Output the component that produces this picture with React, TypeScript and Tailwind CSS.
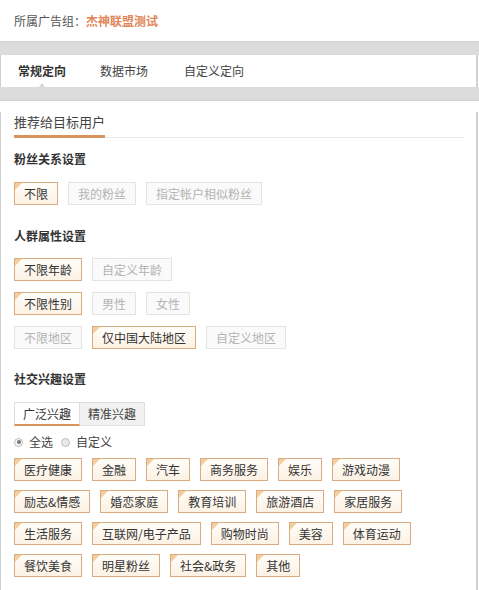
import { useState } from 'react';

type Chip = { label: string; on?: boolean };

const fanChips: Chip[] = [
  { label: '不限', on: true },
  { label: '我的粉丝' },
  { label: '指定帐户相似粉丝' },
];

const crowdRows: Chip[][] = [
  [{ label: '不限年龄', on: true }, { label: '自定义年龄' }],
  [{ label: '不限性别', on: true }, { label: '男性' }, { label: '女性' }],
  [{ label: '不限地区' }, { label: '仅中国大陆地区', on: true }, { label: '自定义地区' }],
];

const interests = [
  '医疗健康', '金融', '汽车', '商务服务', '娱乐', '游戏动漫',
  '励志&情感', '婚恋家庭', '教育培训', '旅游酒店', '家居服务',
  '生活服务', '互联网/电子产品', '购物时尚', '美容', '体育运动',
  '餐饮美食', '明星粉丝', '社会&政务', '其他',
];

const rowBreaks = [6, 11, 16, 20];

function Tag({ label, on }: Chip) {
  if (!on) {
    return (
      <span className="h-[23px] px-[9px] leading-[21px] border border-[#e4e4e4] bg-[#fafafa] text-[#b4b4b4] text-[12px] whitespace-nowrap">
        {label}
      </span>
    );
  }
  return (
    <span className="relative h-[23px] px-[9px] leading-[21px] border border-[#d8ab80] bg-gradient-to-b from-[#fffdf9] to-[#fcf2e4] text-[#333] text-[12px] whitespace-nowrap overflow-hidden">
      <span className="absolute left-0 top-0 w-0 h-0 border-t-[7px] border-r-[7px] border-t-[#f3cd9c] border-r-transparent" />
      {label}
    </span>
  );
}

export default function App() {
  const [tab, setTab] = useState(0);
  const [interestTab, setInterestTab] = useState(0);
  const [all, setAll] = useState(true);

  const rows: string[][] = [];
  let start = 0;
  rowBreaks.forEach((end) => {
    rows.push(interests.slice(start, end));
    start = end;
  });

  return (
    <div className="w-[479px] h-[590px] overflow-hidden bg-white text-[#333] font-['Noto_Sans_CJK_SC','Noto_Sans',sans-serif]">
      {/* Ad group header */}
      <div className="h-[41px] px-[14px] flex items-center text-[12px]">
        <span className="text-[#555]">所属广告组：</span>
        <span className="text-[#e2865a] font-semibold">杰神联盟测试</span>
      </div>

      <div className="h-[14px] bg-[#dcdcdc] border-t border-[#d2d2d2]" />

      {/* Tabs */}
      <div className="w-[478px] h-[32px] bg-white border-l border-r-2 border-[#d0d0d0] flex items-center text-[12px]">
        {['常规定向', '数据市场', '自定义定向'].map((t, i) => (
          <button
            key={t}
            onClick={() => setTab(i)}
            className={`relative h-full flex items-center ${
              i === 0 ? 'ml-[17px]' : i === 1 ? 'ml-[34px]' : 'ml-[36px]'
            } ${tab === i ? 'font-bold text-[#333]' : 'text-[#444]'}`}
          >
            {t}
            {tab === i && (
              <span className="absolute left-1/2 -translate-x-1/2 bottom-0 w-0 h-0 border-l-[3px] border-r-[3px] border-b-[4px] border-l-transparent border-r-transparent border-b-[#d6d6d6]" />
            )}
          </button>
        ))}
      </div>

      <div className="h-[14px] bg-[#dcdcdc] border-b border-[#cfcfcf]" />

      {/* Content */}
      <div className="w-[478px] h-[500px] bg-white border-l border-r-2 border-[#d0d0d0] pl-[13px]">
        <div className="mt-[11px] mr-[12px] flex border-b border-[#ebebeb]">
          <span className="text-[13px] leading-[20px] pb-[3px] border-b-[3px] border-[#d9935e] -mb-px text-[#444]">
            推荐给目标用户
          </span>
        </div>

        <div className="mt-[11px] text-[12px] leading-[20px] font-bold">粉丝关系设置</div>
        <div className="mt-[13px] flex gap-[10px]">
          {fanChips.map((c) => (
            <Tag key={c.label} {...c} />
          ))}
        </div>

        <div className="mt-[21px] text-[12px] leading-[20px] font-bold">人群属性设置</div>
        <div className="mt-[12px] flex flex-col gap-[11px]">
          {crowdRows.map((row, i) => (
            <div key={i} className="flex gap-[10px]">
              {row.map((c) => (
                <Tag key={c.label} {...c} />
              ))}
            </div>
          ))}
        </div>

        <div className="mt-[20px] text-[12px] leading-[20px] font-bold">社交兴趣设置</div>
        <div className="mt-[13px] flex text-[12px]">
          {['广泛兴趣', '精准兴趣'].map((t, i) => (
            <button
              key={t}
              onClick={() => setInterestTab(i)}
              className={`h-[24px] px-[8px] border border-[#dedede] ${
                interestTab === i
                  ? 'bg-white border-b-2 border-b-[#d9935e] text-[#333]'
                  : 'bg-[#f1f1f1] text-[#444]'
              } ${i === 1 ? 'border-l-0' : ''}`}
            >
              {t}
            </button>
          ))}
        </div>

        <div className="mt-[8px] h-[16px] flex items-center text-[12px] text-[#444]">
          <button onClick={() => setAll(true)} className="flex items-center">
            <span className="w-[9px] h-[9px] rounded-full border border-[#bdbdbd] bg-[#f4f4f4] flex items-center justify-center">
              {all && <span className="w-[4px] h-[4px] rounded-full bg-[#777]" />}
            </span>
            <span className="ml-[6px]">全选</span>
          </button>
          <button onClick={() => setAll(false)} className="ml-[8px] flex items-center">
            <span className="w-[9px] h-[9px] rounded-full border border-[#bdbdbd] bg-[#e9e9e9] flex items-center justify-center">
              {!all && <span className="w-[4px] h-[4px] rounded-full bg-[#777]" />}
            </span>
            <span className="ml-[6px]">自定义</span>
          </button>
        </div>

        <div className="mt-[8px] flex flex-col gap-[9px]">
          {rows.map((row, i) => (
            <div key={i} className="flex gap-[10px]">
              {row.map((label) => (
                <Tag key={label} label={label} on />
              ))}
            </div>
          ))}
        </div>
      </div>
    </div>
  );
}
